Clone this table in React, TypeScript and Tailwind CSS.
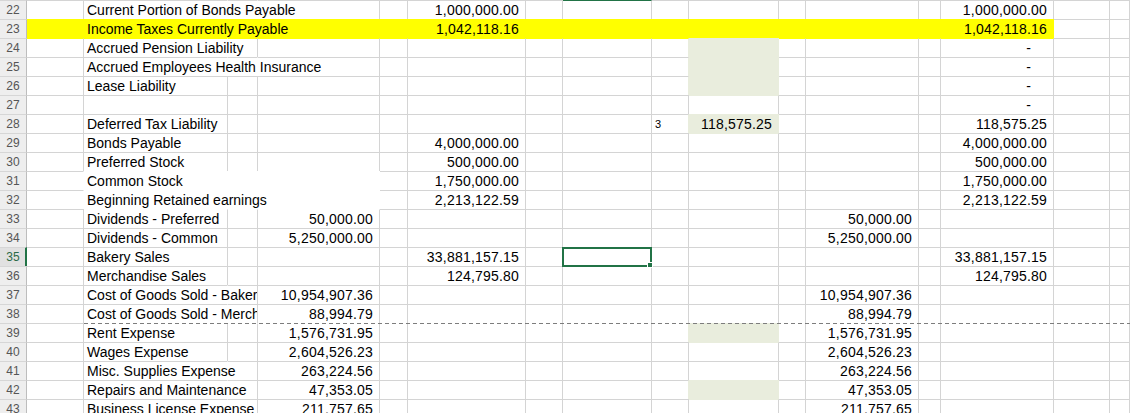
import React from "react";

type Fill = "yellow" | "green" | "white";
type Cell = { t?: string; num?: boolean; dash?: boolean; small?: boolean; fill?: Fill; clip?: boolean };
type Row = { n: number; cells: Record<string, Cell>; ovr?: string[]; sel?: boolean; pageBreak?: boolean };

const cols = [
  { k: "A", w: "w-[57px]" },
  { k: "B", w: "w-[144px]" },
  { k: "C", w: "w-[30px]" },
  { k: "D", w: "w-[122px]" },
  { k: "E", w: "w-[28px]" },
  { k: "F", w: "w-[118px]" },
  { k: "G", w: "w-[37px]" },
  { k: "H", w: "w-[89px]" },
  { k: "I", w: "w-[37px]" },
  { k: "J", w: "w-[90px]" },
  { k: "K", w: "w-[27px]" },
  { k: "L", w: "w-[113px]" },
  { k: "M", w: "w-[22px]" },
  { k: "N", w: "w-[113px]" },
  { k: "O", w: "w-[56px]" },
  { k: "P", w: "flex-1" },
];

const yellowRow: Record<string, Cell> = {};
"ABCDEFGHIJKLMN".split("").forEach((k) => (yellowRow[k] = { fill: "yellow" }));

const rows: Row[] = [
  { n: 22, cells: { B: { t: "Current Portion of Bonds Payable" }, F: { t: "1,000,000.00", num: true }, N: { t: "1,000,000.00", num: true } }, ovr: ["B", "C"] },
  {
    n: 23,
    cells: {
      ...yellowRow,
      B: { t: "Income Taxes Currently Payable", fill: "yellow" },
      F: { t: "1,042,118.16", num: true, fill: "yellow" },
      N: { t: "1,042,118.16", num: true, fill: "yellow" },
    },
  },
  { n: 24, cells: { B: { t: "Accrued Pension Liability" }, J: { fill: "green" }, N: { t: "-", dash: true } }, ovr: ["B"] },
  { n: 25, cells: { B: { t: "Accrued Employees Health Insurance" }, J: { fill: "green" }, N: { t: "-", dash: true } }, ovr: ["B", "C"] },
  { n: 26, cells: { B: { t: "Lease Liability" }, J: { fill: "green" }, N: { t: "-", dash: true } } },
  { n: 27, cells: { N: { t: "-", dash: true } } },
  {
    n: 28,
    cells: {
      B: { t: "Deferred Tax Liability" },
      I: { t: "3", small: true },
      J: { t: "118,575.25", num: true, fill: "green" },
      N: { t: "118,575.25", num: true },
    },
  },
  { n: 29, cells: { B: { t: "Bonds Payable" }, F: { t: "4,000,000.00", num: true }, N: { t: "4,000,000.00", num: true } } },
  { n: 30, cells: { B: { t: "Preferred Stock" }, F: { t: "500,000.00", num: true }, N: { t: "500,000.00", num: true } } },
  {
    n: 31,
    cells: { B: { t: "Common Stock", fill: "white" }, C: { fill: "white" }, D: { fill: "white" }, F: { t: "1,750,000.00", num: true }, N: { t: "1,750,000.00", num: true } },
  },
  {
    n: 32,
    cells: {
      B: { t: "Beginning Retained earnings", fill: "white" },
      C: { fill: "white" },
      D: { fill: "white" },
      F: { t: "2,213,122.59", num: true },
      N: { t: "2,213,122.59", num: true },
    },
  },
  { n: 33, cells: { B: { t: "Dividends - Preferred" }, D: { t: "50,000.00", num: true }, L: { t: "50,000.00", num: true } } },
  { n: 34, cells: { B: { t: "Dividends - Common" }, D: { t: "5,250,000.00", num: true }, L: { t: "5,250,000.00", num: true } } },
  { n: 35, sel: true, cells: { B: { t: "Bakery Sales" }, F: { t: "33,881,157.15", num: true }, N: { t: "33,881,157.15", num: true } } },
  { n: 36, cells: { B: { t: "Merchandise Sales" }, F: { t: "124,795.80", num: true }, N: { t: "124,795.80", num: true } } },
  { n: 37, cells: { B: { t: "Cost of Goods Sold - Bakery", clip: true }, D: { t: "10,954,907.36", num: true }, L: { t: "10,954,907.36", num: true } }, ovr: ["B"] },
  { n: 38, cells: { B: { t: "Cost of Goods Sold - Merchandise", clip: true }, D: { t: "88,994.79", num: true }, L: { t: "88,994.79", num: true } }, ovr: ["B"] },
  { n: 39, pageBreak: true, cells: { B: { t: "Rent Expense" }, D: { t: "1,576,731.95", num: true }, J: { fill: "green" }, L: { t: "1,576,731.95", num: true } } },
  { n: 40, cells: { B: { t: "Wages Expense" }, D: { t: "2,604,526.23", num: true }, L: { t: "2,604,526.23", num: true } } },
  { n: 41, cells: { B: { t: "Misc. Supplies Expense" }, D: { t: "263,224.56", num: true }, L: { t: "263,224.56", num: true } }, ovr: ["B"] },
  { n: 42, cells: { B: { t: "Repairs and Maintenance" }, D: { t: "47,353.05", num: true }, J: { fill: "green" }, L: { t: "47,353.05", num: true } }, ovr: ["B"] },
  { n: 43, cells: { B: { t: "Business License Expense" }, D: { t: "211,757.65", num: true }, L: { t: "211,757.65", num: true } }, ovr: ["B"] },
];

const bgCls: Record<Fill, string> = { yellow: "bg-[#ffff00]", green: "bg-[#e9eddd]", white: "bg-white" };
const topCls: Record<string, string> = {
  grid: "border-t-[#d4d4d4]",
  none: "border-t-transparent",
  yellow: "border-t-[#ffff00]",
  green: "border-t-[#e9eddd]",
  white: "border-t-white",
  sel: "border-t-[#217346]",
};
const rightCls: Record<string, string> = {
  grid: "border-r-[#d4d4d4]",
  none: "border-r-transparent",
  yellow: "border-r-[#ffff00]",
  green: "border-r-[#e9eddd]",
  white: "border-r-white",
};

const fillAt = (r: number, c: number): Fill | undefined => {
  if (r < 0 || c < 0 || c >= cols.length) return undefined;
  return rows[r].cells[cols[c].k]?.fill;
};

const topKey = (r: number, c: number) => {
  const f = fillAt(r, c) ?? fillAt(r - 1, c);
  if (f) return f;
  if (r === 0 && cols[c].k === "H") return "sel";
  if (rows[r].pageBreak && c >= 1) return "none";
  return "grid";
};

const rightKey = (r: number, c: number) => {
  const f = fillAt(r, c) ?? fillAt(r, c + 1);
  if (f) return f;
  if (rows[r].ovr?.includes(cols[c].k)) return "none";
  return "grid";
};

const SheetCell = ({ r, c }: { r: number; c: number }) => {
  const col = cols[c];
  const cell = rows[r].cells[col.k];
  const selected = rows[r].sel && col.k === "H";
  let content: React.ReactNode = null;
  if (cell?.t) {
    if (cell.dash) content = <span className="pr-[22px]">-</span>;
    else if (cell.num) content = <span className="pr-[6px] tracking-[0.2px]">{cell.t}</span>;
    else if (cell.small) content = <span className="pl-[3px] text-[11px]">{cell.t}</span>;
    else if (cell.clip)
      content = <div className="relative z-10 w-[173px] shrink-0 overflow-hidden whitespace-nowrap pl-[3px]">{cell.t}</div>;
    else content = <span className="relative z-10 whitespace-nowrap pl-[3px]">{cell.t}</span>;
  }
  const align = cell?.num || cell?.dash ? "justify-end" : "justify-start";
  return (
    <div
      className={`${col.w} ${selected ? "relative" : ""} flex h-[19px] shrink-0 items-center border-t border-r ${align} ${topCls[topKey(r, c)]} ${rightCls[rightKey(r, c)]} ${cell?.fill ? bgCls[cell.fill] : ""}`}
    >
      {content}
      {selected && (
        <div className="absolute -top-px -right-px -bottom-px -left-px z-20 border-2 border-[#217346]">
          <div className="absolute -right-[3px] -bottom-[3px] h-[6px] w-[6px] border border-white bg-[#217346]" />
        </div>
      )}
    </div>
  );
};

export default function App() {
  return (
    <div className="h-[413px] w-[1130px] overflow-hidden bg-white font-['Liberation_Sans',Arial,sans-serif] text-[14px] leading-[18px] text-black">
      {rows.map((row, r) => (
        <div key={row.n} className="relative flex">
          <div
            className={`flex h-[19px] w-[27px] shrink-0 items-center justify-center border-t border-t-[#d6d6d6] text-[12px] ${
              row.sel
                ? "border-r-2 border-r-[#217346] bg-[#e1e1e1] pl-px text-[#2c6a47]"
                : "border-r border-r-[#bdbdbd] bg-[#eeeeee] text-[#555555]"
            }`}
          >
            {row.n}
          </div>
          {cols.map((_, c) => (
            <SheetCell key={c} r={r} c={c} />
          ))}
          {row.pageBreak && (
            <div className="absolute top-0 right-0 left-[84px] h-px bg-[linear-gradient(to_right,#7d7d7d_4px,transparent_4px)] bg-[length:7px_1px]" />
          )}
        </div>
      ))}
    </div>
  );
}
